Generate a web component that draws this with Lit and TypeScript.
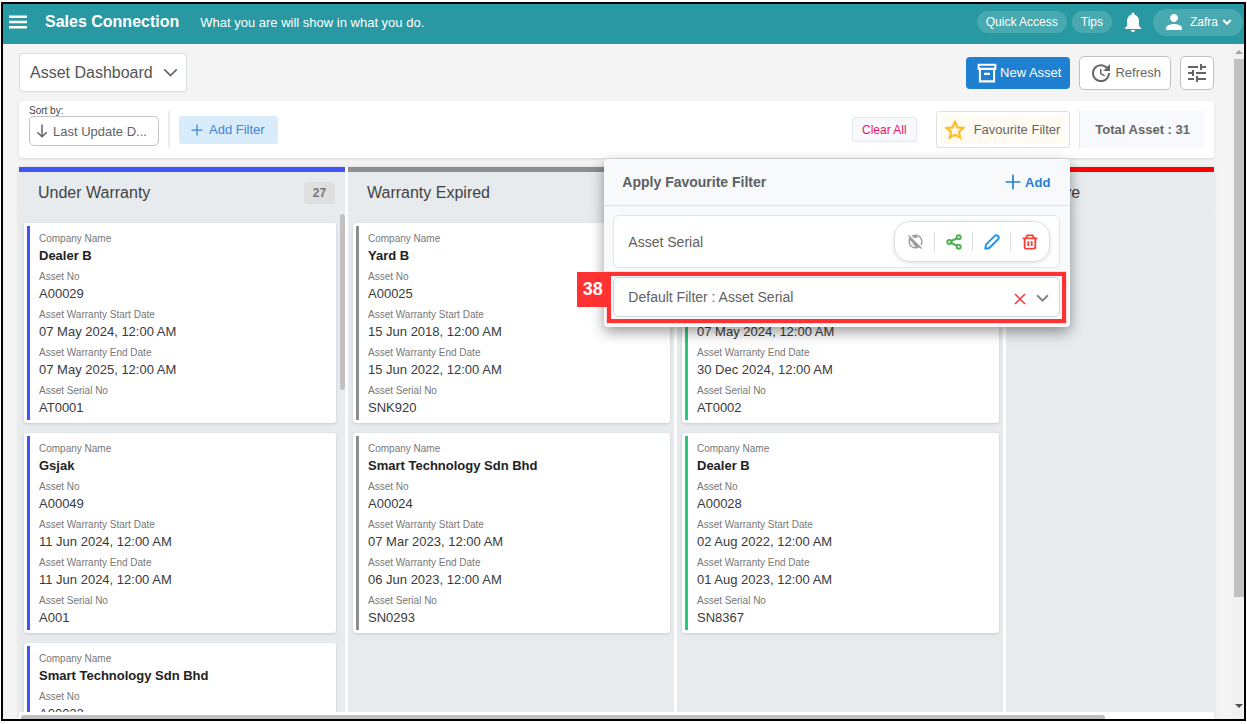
import { LitElement, html, css, svg, nothing } from "lit";
import { customElement, property } from "lit/decorators.js";
import { styleMap } from "lit/directives/style-map.js";

interface Field {
  label: string;
  value: string;
}

interface Column {
  title: string;
  count?: number;
  color: string;
  scrolls?: boolean;
  cards: Field[][];
}

const LABELS = [
  "Company Name",
  "Asset No",
  "Asset Warranty Start Date",
  "Asset Warranty End Date",
  "Asset Serial No",
];

const asset = (...values: string[]): Field[] =>
  values.map((value, i) => ({ label: LABELS[i], value }));

const COLUMNS: Column[] = [
  {
    title: "Under Warranty",
    count: 27,
    color: "#4154f5",
    scrolls: true,
    cards: [
      asset("Dealer B", "A00029", "07 May 2024, 12:00 AM", "07 May 2025, 12:00 AM", "AT0001"),
      asset("Gsjak", "A00049", "11 Jun 2024, 12:00 AM", "11 Jun 2024, 12:00 AM", "A001"),
      asset("Smart Technology Sdn Bhd", "A00022"),
    ],
  },
  {
    title: "Warranty Expired",
    color: "#8c8d8d",
    cards: [
      asset("Yard B", "A00025", "15 Jun 2018, 12:00 AM", "15 Jun 2022, 12:00 AM", "SNK920"),
      asset("Smart Technology Sdn Bhd", "A00024", "07 Mar 2023, 12:00 AM", "06 Jun 2023, 12:00 AM", "SN0293"),
    ],
  },
  {
    title: "",
    color: "#27c97d",
    cards: [
      asset("", "", "07 May 2024, 12:00 AM", "30 Dec 2024, 12:00 AM", "AT0002"),
      asset("Dealer B", "A00028", "02 Aug 2022, 12:00 AM", "01 Aug 2023, 12:00 AM", "SN8367"),
    ],
  },
  { title: "Inactive", color: "#ff0000", cards: [] },
];

const icon = (size: number, body: unknown) => html`
  <svg width=${size} height=${size} viewBox="0 0 24 24" fill="none" stroke="currentColor"
    stroke-width="2" aria-hidden="true">${body}</svg>`;

const solid = (size: number, d: string) =>
  icon(size, svg`<path fill="currentColor" stroke="none" d=${d} />`);

const PATHS = {
  bell: "M12 22c1.100 0 2-.900 2-2h-4c0 1.100.890 2 2 2zm6-6v-5c0-3.070-1.640-5.640-4.500-6.320V4c0-.830-.670-1.500-1.500-1.500s-1.500.670-1.500 1.500v.680C7.630 5.360 6 7.920 6 11v5l-2 2v1h16v-1l-2-2z",
  person: "M12 12c2.210 0 4-1.790 4-4s-1.790-4-4-4-4 1.790-4 4 1.790 4 4 4zm0 2c-2.670 0-8 1.340-8 4v2h16v-2c0-2.660-5.330-4-8-4z",
  update: "M21 10.120h-6.780l2.740-2.820c-2.730-2.700-7.150-2.800-9.880-.100-2.730 2.710-2.730 7.080 0 9.790s7.150 2.710 9.880 0C18.320 15.650 19 14.080 19 12.100h2c0 1.980-.880 4.550-2.640 6.290-3.510 3.480-9.210 3.480-12.720 0-3.500-3.470-3.530-9.110-.020-12.580s9.140-3.470 12.650 0L21 3v7.120zM12.500 8v4.250l3.500 2.080-.720 1.210L11 13V8h1.500z",
  tune: "M3 17v2h6v-2H3zM3 5v2h10V5H3zm10 16v-2h8v-2h-8v-2h-2v6h2zM7 9v2H3v2h4v2h2V9H7zm14 4v-2H11v2h10zm-6-4h2V7h4V5h-4V3h-2v6z",
  publicOff: "M11 8.170L6.490 3.660C8.070 2.610 9.960 2 12 2c5.520 0 10 4.480 10 10 0 2.040-.610 3.930-1.660 5.510l-1.460-1.460C19.590 14.870 20 13.480 20 12c0-3.350-2.070-6.220-5-7.410V5c0 1.100-.900 2-2 2h-2v1.170zm10.190 13.020l-1.410 1.410-2.270-2.270C15.930 21.390 14.040 22 12 22 6.480 22 2 17.520 2 12c0-2.040.610-3.930 1.660-5.510L1.390 4.220 2.800 2.810l18.390 18.380zM11 18c-1.100 0-2-.900-2-2v-1l-4.790-4.790C4.080 10.790 4 11.380 4 12c0 4.080 3.050 7.440 7 7.930V18z",
};

const chevron = svg`<path stroke-width="2.500" d="M2 7l10 10L22 7" />`;
const plus = svg`<path stroke-width="2.500" d="M12 1v22M1 12h22" />`;

const baseStyles = css`
  :host {
    display: block;
    box-sizing: border-box;
    font-family: "Liberation Sans", Arial, sans-serif;
  }
  *, *::before, *::after {
    box-sizing: border-box;
  }
  button, select {
    font: inherit;
    color: inherit;
    margin: 0;
    cursor: pointer;
  }
  button {
    display: inline-flex;
    align-items: center;
    justify-content: center;
    border: 0;
    background: none;
    padding: 0;
    white-space: nowrap;
  }
  select {
    appearance: none;
  }
  svg {
    display: block;
    flex: none;
  }
`;

@customElement("asset-card")
class AssetCard extends LitElement {
  @property({ attribute: false }) fields: Field[] = [];
  @property() color = "";

  static styles = [
    baseStyles,
    css`
      .card {
        display: flex;
        min-height: 200px;
        padding: 3px;
        background: #fff;
        border-radius: 3px;
        box-shadow: 0 1px 3px rgba(0, 0, 0, 0.14);
      }
      .stripe {
        width: 3px;
        flex: none;
      }
      .fields {
        flex: 1;
        margin: 0;
        padding: 5px 9px 3px;
        display: flex;
        flex-direction: column;
        gap: 4px;
      }
      dt {
        font-size: 10px;
        line-height: 16px;
        color: #777;
      }
      dd {
        margin: 0;
        min-height: 18px;
        font-size: 13px;
        line-height: 18px;
        color: #3a3a3a;
      }
      .name {
        font-weight: bold;
        color: #222;
      }
    `,
  ];

  render() {
    return html`<article class="card">
      <div class="stripe" style=${styleMap({ background: this.color })}></div>
      <dl class="fields">
        ${this.fields.map(
          (f, i) => html`<div><dt>${f.label}</dt><dd class=${i === 0 ? "name" : ""}>${f.value}</dd></div>`,
        )}
      </dl>
    </article>`;
  }
}

@customElement("board-column")
class BoardColumn extends LitElement {
  @property({ attribute: false }) column!: Column;

  static styles = [
    baseStyles,
    css`
      :host {
        display: flex;
        flex-direction: column;
        min-height: 0;
        background: #e7ebee;
      }
      .bar {
        height: 5px;
        flex: none;
      }
      .head {
        display: flex;
        align-items: center;
        justify-content: space-between;
        flex: none;
        height: 42px;
        padding: 0 10px 0 19px;
        border-bottom: 1px solid #eceff1;
      }
      h2 {
        margin: 0;
        font-size: 16px;
        line-height: 20px;
        font-weight: normal;
        color: #424242;
      }
      .count {
        min-width: 31px;
        padding: 0 8px;
        border-radius: 3px;
        background: #dfdfdf;
        color: #777;
        font-size: 12px;
        line-height: 22px;
        font-weight: bold;
        text-align: center;
      }
      .body {
        flex: 1;
        min-height: 0;
        display: flex;
        overflow: hidden;
      }
      .list {
        flex: 1;
        display: flex;
        flex-direction: column;
        gap: 10px;
        padding: 9px 4px 9px 5px;
      }
      .thumb {
        width: 5px;
        height: 176px;
        border-radius: 3px;
        background: #c1c1c1;
      }
    `,
  ];

  render() {
    const c = this.column;
    return html`
      <div class="bar" style=${styleMap({ background: c.color })}></div>
      <header class="head">
        <h2>${c.title}</h2>
        ${c.count ? html`<span class="count">${c.count}</span>` : nothing}
      </header>
      <div class="body">
        <div class="list">
          ${c.cards.map((f) => html`<asset-card .fields=${f} .color=${c.color}></asset-card>`)}
        </div>
        ${c.scrolls ? html`<div class="thumb"></div>` : nothing}
      </div>`;
  }
}

@customElement("favourite-menu")
class FavouriteMenu extends LitElement {
  static styles = [
    baseStyles,
    css`
      :host {
        background: #f8f9fb;
        border-radius: 4px;
        box-shadow: 0 5px 14px rgba(0, 0, 0, 0.4);
        font-size: 14px;
        color: #616161;
      }
      .head {
        display: flex;
        align-items: center;
        justify-content: space-between;
        height: 47px;
        padding: 0 20px 0 18px;
        border-bottom: 1px solid #dfe2e5;
      }
      h3 {
        margin: 0;
        font-size: 14px;
        line-height: 18px;
        color: #5c5f62;
      }
      .add {
        gap: 4px;
        font-size: 13px;
        font-weight: bold;
        color: #1f7fd1;
      }
      .body {
        display: flex;
        flex-direction: column;
        gap: 9px;
        padding: 9px 10px 10px 9px;
      }
      .item {
        display: flex;
        align-items: center;
        justify-content: space-between;
        height: 53px;
        padding: 0 9px 0 14px;
        border: 1px solid #e2e4e7;
        border-radius: 6px;
        background: #fff;
      }
      .tools {
        display: flex;
        align-items: center;
        height: 41px;
        padding: 0 1px;
        border: 1px solid #e0e0e0;
        border-radius: 16px;
        box-shadow: 0 1px 4px rgba(0, 0, 0, 0.14);
      }
      .tools button {
        width: 38px;
        height: 19px;
      }
      .tools button + button {
        border-left: 1px solid #ddd;
      }
      .off { color: #9e9e9e; }
      .share { color: #4caf50; }
      .edit { color: #2196f3; }
      .delete { color: #f44336; }
      .default {
        position: relative;
        display: flex;
      }
      .default select {
        flex: 1;
        height: 40px;
        padding: 0 60px 0 14px;
        border: 1px solid #cfd5da;
        border-radius: 6px;
        background: #fff;
      }
      .actions {
        position: absolute;
        top: 15px;
        right: 11px;
        display: flex;
        align-items: center;
        gap: 10px;
        color: #7b848c;
      }
      .clear {
        color: #f33;
      }
      .outline {
        position: absolute;
        inset: -5px -6px -6px;
        border: 4px solid #ff3131;
        box-shadow: 0 0 0 1px #fbdcdc;
        pointer-events: none;
      }
      .step {
        position: absolute;
        top: -5px;
        right: calc(100% + 5px);
        width: 31px;
        background: #ff3131;
        color: #fff;
        font-size: 18px;
        line-height: 35px;
        font-weight: bold;
        text-align: center;
      }
    `,
  ];

  render() {
    return html`
      <header class="head">
        <h3>Apply Favourite Filter</h3>
        <button class="add">${icon(16, plus)}Add</button>
      </header>
      <div class="body">
        <div class="item">
          <span>Asset Serial</span>
          <div class="tools">
            <button class="off" aria-label="Private">${solid(17, PATHS.publicOff)}</button>
            <button class="share" aria-label="Share">${icon(16, svg`
              <g stroke-width="3"><circle cx="5" cy="12" r="3" /><circle cx="19" cy="5" r="3" />
              <circle cx="19" cy="19" r="3" /><path d="M8 10.500l8-4M8 13.500l8 4" /></g>`)}</button>
            <button class="edit" aria-label="Edit">${icon(16, svg`
              <path stroke-width="3" stroke-linejoin="round"
                d="M2 22l1-6L16.500 2.500q2.500-1.500 4.500.5t.5 4.500L8 21z" />`)}</button>
            <button class="delete" aria-label="Delete">${icon(16, svg`
              <g stroke-width="2.800"><path d="M1 6.500h22M6 6l2-4h8l2 4M4 7v13a2 2 0 0 0 2 2h12a2 2 0 0 0 2-2V7M9.500 11v7M14.500 11v7" /></g>`)}</button>
          </div>
        </div>
        <div class="default">
          <select aria-label="Default filter">
            <option>Default Filter : Asset Serial</option>
          </select>
          <div class="actions">
            <button class="clear" aria-label="Clear default filter">${icon(12, svg`<path stroke-width="3" d="M2 2l20 20M22 2L2 22" />`)}</button>
            ${icon(13, svg`<path stroke-width="3.500" d="M2 6l10 10L22 6" />`)}
          </div>
          <div class="outline"></div>
          <div class="step">38</div>
        </div>
      </div>`;
  }
}

@customElement("app-root")
class AppRoot extends LitElement {
  static styles = [
    baseStyles,
    css`
      :host {
        height: 100vh;
        padding: 2px 1px 3px;
        background: #fff;
        font-size: 13px;
        color: #5f6368;
        overflow: hidden;
      }
      .frame {
        display: flex;
        flex-direction: column;
        height: 100%;
        border: 2px solid #000;
        background: #f4f4f4;
      }
      .topbar {
        display: flex;
        align-items: center;
        flex: none;
        height: 40px;
        padding: 0 1px 4px 6px;
        background: #2899a3;
        color: #fff;
      }
      h1 {
        margin: 0 21px 0 18px;
        font-size: 16px;
        line-height: 24px;
      }
      .tagline {
        flex: 1;
      }
      .chip {
        height: 22px;
        margin-left: 5px;
        padding: 0 9px;
        border-radius: 11px;
        background: #48a9b1;
        font-size: 12px;
      }
      .bell {
        margin: 0 8px 0 9px;
      }
      .user {
        height: 27px;
        gap: 4px;
        padding: 0 11px 0 9px;
        border-radius: 14px;
        background: #48a9b1;
        font-size: 12px;
      }
      .page {
        flex: 1;
        min-height: 0;
        display: flex;
      }
      .content {
        flex: 1;
        min-width: 0;
        display: flex;
        flex-direction: column;
        gap: 9px;
        padding: 9px 18px 0 16px;
      }
      .scroll {
        display: flex;
        flex-direction: column;
        width: 12px;
        padding: 6px 0 11px 2px;
        gap: 5px;
        background: #f1f1f1;
        align-items: center;
      }
      .scroll .thumb {
        width: 10px;
        height: 538px;
        background: #c1c1c1;
      }
      .up, .down {
        border: 4px solid transparent;
      }
      .up {
        border-top: 0;
        border-bottom-color: #a3a3a3;
      }
      .down {
        margin-top: auto;
        border-bottom: 0;
        border-top-color: #505050;
      }
      .titlebar {
        display: flex;
        align-items: center;
        gap: 9px;
      }
      .picker {
        position: relative;
        margin-right: auto;
      }
      .picker select {
        display: block;
        height: 39px;
        padding: 0 33px 0 10px;
        border: 1px solid #d5dce3;
        border-radius: 3px;
        background: #fff;
        font-size: 16px;
        color: #555;
      }
      .picker svg {
        position: absolute;
        right: 9px;
        top: 12px;
        pointer-events: none;
      }
      .primary {
        height: 32px;
        gap: 3px;
        padding: 0 9px 0 11px;
        border-radius: 4px;
        background: #1f7fd1;
        color: #fff;
      }
      .outlined {
        height: 34px;
        gap: 2px;
        padding: 0 9px;
        border: 1px solid #c0c0c0;
        border-radius: 5px;
        background: #fff;
        color: #666;
      }
      .square {
        padding: 0 4px;
      }
      .filters {
        display: flex;
        align-items: center;
        gap: 9px;
        height: 57px;
        padding: 0 10px;
        border-radius: 3px;
        background: #fff;
        box-shadow: 0 1px 3px rgba(0, 0, 0, 0.12);
      }
      .sort {
        position: relative;
        display: flex;
        flex-direction: column;
        padding-bottom: 8px;
      }
      .sort label {
        font-size: 10px;
        line-height: 11px;
        color: #444;
      }
      .sort select {
        width: 130px;
        height: 30px;
        padding: 0 8px 0 23px;
        border: 1px solid #c4c4c4;
        border-radius: 5px;
        background: #fff;
      }
      .sort svg {
        position: absolute;
        left: 6px;
        top: 19px;
        pointer-events: none;
      }
      .rule {
        width: 2px;
        height: 37px;
        background: #ececec;
      }
      .add-filter {
        height: 28px;
        gap: 6px;
        padding: 0 13px 0 12px;
        border-radius: 3px;
        background: #d9ecfc;
        color: #3b86d6;
      }
      .clear-all {
        height: 25px;
        margin: 0 10px 0 auto;
        padding: 0 9px;
        border: 1px solid #e3e6ea;
        border-radius: 3px;
        background: #f8f9fc;
        color: #ec1561;
        font-size: 12px;
      }
      .favourite {
        position: relative;
      }
      .fav-button {
        height: 37px;
        padding: 4px;
        border: 1px solid #e0e0e0;
        border-radius: 3px;
        background: #fff;
        color: #666;
      }
      .fav-inner {
        display: flex;
        align-items: center;
        gap: 9px;
        height: 28px;
        padding: 0 5px 0 4px;
        background: #fffbf3;
      }
      favourite-menu {
        position: absolute;
        top: calc(100% + 11px);
        right: 0;
        width: 466px;
        z-index: 2;
      }
      .total {
        height: 37px;
        padding: 0 14px 0 15px;
        border-left: 1px solid #e3e6ea;
        background: #f8f9fc;
        font-weight: bold;
        line-height: 37px;
        color: #666;
      }
      .board {
        flex: 1;
        min-height: 0;
        display: flex;
        flex-direction: column;
        background: #fff;
        box-shadow: 0 0 4px rgba(0, 0, 0, 0.1);
      }
      .columns {
        flex: 1;
        min-height: 0;
        display: flex;
        gap: 3px;
        overflow: hidden;
      }
      board-column {
        flex: 0 0 326px;
      }
      .hscroll {
        height: 7px;
        padding: 3px 2px 0;
      }
      .hscroll div {
        width: 91%;
        height: 4px;
        border-radius: 3px 3px 0 0;
        background: #c1c1c1;
      }
    `,
  ];

  render() {
    return html`
      <div class="frame">
        <header class="topbar">
          <button aria-label="Menu">${icon(18, svg`<path stroke-width="3.500" d="M0 5h24M0 12h24M0 19h24" />`)}</button>
          <h1>Sales Connection</h1>
          <span class="tagline">What you are will show in what you do.</span>
          <button class="chip">Quick Access</button>
          <button class="chip">Tips</button>
          <button class="bell" aria-label="Notifications">${solid(24, PATHS.bell)}</button>
          <button class="user">
            ${solid(24, PATHS.person)}
            <span>Zafra</span>
            ${icon(10, svg`<path stroke-width="5" d="M3 7l9 9 9-9" />`)}
          </button>
        </header>
        <div class="page">
          <main class="content">
            <div class="titlebar">
              <div class="picker">
                <select aria-label="Dashboard"><option>Asset Dashboard</option></select>
                ${icon(15, chevron)}
              </div>
              <button class="primary">
                ${icon(20, svg`<path stroke-width="2.500" d="M2 2h20v5H2zM3.500 7v15h17V7M8.500 13h7" />`)}
                New Asset
              </button>
              <button class="outlined">${solid(24, PATHS.update)}Refresh</button>
              <button class="outlined square" aria-label="Settings">${solid(24, PATHS.tune)}</button>
            </div>
            <div class="filters">
              <div class="sort">
                <label for="sort">Sort by:</label>
                <select id="sort"><option>Last Update D...</option></select>
                ${icon(14, svg`<path stroke-width="2.500" d="M12 1v21M4 14l8 8 8-8" />`)}
              </div>
              <div class="rule"></div>
              <button class="add-filter">${icon(12, plus)}Add Filter</button>
              <button class="clear-all">Clear All</button>
              <div class="favourite">
                <button class="fav-button">
                  <span class="fav-inner">
                    ${icon(20, svg`<path stroke="#fbbf2d" stroke-width="2.800" d="M12 2.500l2.900 6.300 6.900.8-5.100 4.700 1.400 6.800L12 17.700l-6.100 3.400 1.400-6.800L2.200 9.600l6.900-.8z" />`)}
                    Favourite Filter
                  </span>
                </button>
                <favourite-menu></favourite-menu>
              </div>
              <div class="total">Total Asset : 31</div>
            </div>
            <section class="board">
              <div class="columns">
                ${COLUMNS.map((c) => html`<board-column .column=${c}></board-column>`)}
              </div>
              <div class="hscroll"><div></div></div>
            </section>
          </main>
          <div class="scroll">
            <div class="up"></div>
            <div class="thumb"></div>
            <div class="down"></div>
          </div>
        </div>
      </div>`;
  }
}
